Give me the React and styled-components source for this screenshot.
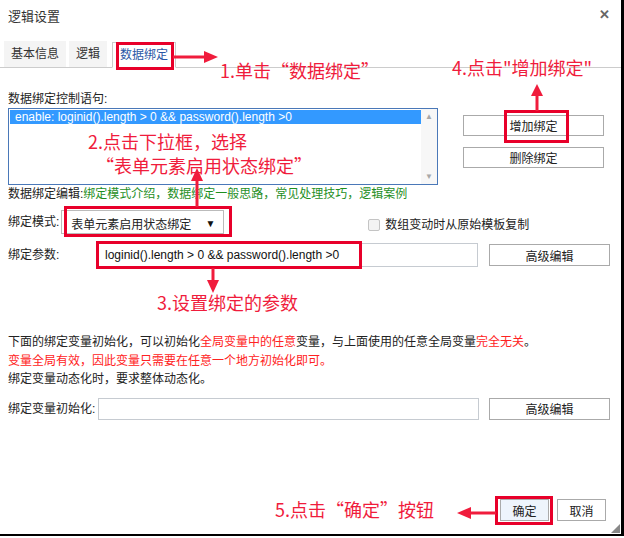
import React from 'react'
import styled, { createGlobalStyle } from 'styled-components'

const GlobalStyle = createGlobalStyle`
  html, body { margin: 0; padding: 0; background: #fff; }
  body {
    font-family: "Liberation Sans", "Noto Sans CJK SC", sans-serif;
    font-size: 12px;
    color: #222;
  }
`

const RED = '#f01c3c'

const App = () => {
  return (
    <>
      <GlobalStyle />
      <Dialog>
        <Header>
          <Title>逻辑设置</Title>
          <Close>✕</Close>
        </Header>
        <Tabs>
          <Tab>基本信息</Tab>
          <Tab>逻辑</Tab>
          <Tab $active>数据绑定</Tab>
        </Tabs>

        <Body>
          <TopRow>
            <ListCol>
              <Label>数据绑定控制语句:</Label>
              <ListBox>
                <ListItems>
                  <Item $selected>enable: loginid().length &gt; 0 &amp;&amp; password().length &gt;0</Item>
                </ListItems>
                <ScrollBar>
                  <ScrollArrow>▲</ScrollArrow>
                  <ScrollArrow>▼</ScrollArrow>
                </ScrollBar>
              </ListBox>
            </ListCol>
            <SideButtons>
              <Button $w={141} $h={21}>增加绑定</Button>
              <Button $w={141} $h={21}>删除绑定</Button>
            </SideButtons>
          </TopRow>

          <EditLine>
            数据绑定编辑:<Green>绑定模式介绍，数据绑定一般思路，常见处理技巧，逻辑案例</Green>
          </EditLine>

          <ModeRow>
            <Label>绑定模式:</Label>
            <Select>
              <span>表单元素启用状态绑定</span>
              <Caret>▼</Caret>
            </Select>
            <CheckLabel>
              <CheckBox />
              数组变动时从原始模板复制
            </CheckLabel>
          </ModeRow>

          <FieldRow $top={9}>
            <Label $w={88}>绑定参数:</Label>
            <Input $w={382} $h={24}>loginid().length &gt; 0 &amp;&amp; password().length &gt;0</Input>
            <Button $w={121} $h={22} $ml={11}>高级编辑</Button>
          </FieldRow>

          <Notes>
            <p>下面的绑定变量初始化，可以初始化<Red>全局变量中的任意</Red>变量，与上面使用的任意全局变量<Red>完全无关</Red>。</p>
            <p><Red>变量全局有效，因此变量只需要在任意一个地方初始化即可。</Red></p>
            <p>绑定变量动态化时，要求整体动态化。</p>
          </Notes>

          <FieldRow $top={9}>
            <Label $w={90}>绑定变量初始化:</Label>
            <Input $w={381} $h={22} />
            <Button $w={121} $h={22} $ml={10}>高级编辑</Button>
          </FieldRow>
        </Body>

        <Footer>
          <Button $w={49} $h={22} $primary>确定</Button>
          <Button $w={49} $h={22}>取消</Button>
        </Footer>

        <Grip />

        <Marks viewBox="0 0 621 534" width="621" height="534">
          <g fill="none" stroke="#e8002a" strokeWidth="3">
            <rect x="117.5" y="43.5" width="55" height="25" />
            <rect x="505.5" y="111.5" width="62" height="30" />
            <rect x="65.5" y="207.5" width="165" height="28" />
            <rect x="97.5" y="242.5" width="263" height="25" />
            <rect x="496.5" y="497.5" width="55" height="26" />
          </g>
          <g stroke={RED} strokeWidth="3" fill={RED}>
            <line x1="173" y1="57" x2="206" y2="57" />
            <polygon points="218,57 204,51 204,63" stroke="none" />
            <line x1="537" y1="111" x2="537" y2="94" />
            <polygon points="537,84 531,96 543,96" stroke="none" />
            <line x1="197" y1="207" x2="197" y2="178" />
            <polygon points="197,168 191,181 203,181" stroke="none" />
            <line x1="213" y1="268" x2="213" y2="282" />
            <polygon points="213,293 207,280 219,280" stroke="none" />
            <line x1="496" y1="513" x2="469" y2="513" />
            <polygon points="457,513 471,507 471,519" stroke="none" />
          </g>
        </Marks>

        <Note $x={220} $y={58}>1.单击“数据绑定”</Note>
        <Note $x={452} $y={55}>4.点击"增加绑定"</Note>
        <Note $x={88} $y={129}>2.点击下拉框，选择</Note>
        <Note $x={96} $y={153}>“表单元素启用状态绑定”</Note>
        <Note $x={157} $y={290}>3.设置绑定的参数</Note>
        <Note $x={275} $y={497}>5.点击“确定”按钮</Note>
      </Dialog>
    </>
  )
}

export default App

const Dialog = styled.div`
  position: relative;
  width: 621px;
  height: 534px;
  border-right: 3px solid #000;
  border-bottom: 2px solid #000;
  background: #fff;
  display: flex;
  flex-direction: column;
  overflow: hidden;
`

const Header = styled.div`
  height: 41px;
  display: flex;
  align-items: flex-start;
  justify-content: space-between;
  padding: 0 11px 0 8px;
  box-sizing: border-box;
`

const Title = styled.div`
  font-size: 13px;
  line-height: 34px;
  color: #333;
`

const Close = styled.div`
  font-size: 13px;
  font-weight: bold;
  line-height: 30px;
  color: #666;
`

const Tabs = styled.div`
  display: flex;
  align-items: flex-end;
  gap: 3px;
  height: 26px;
  padding-left: 4px;
  border-bottom: 1px solid #ccc;
`

const Tab = styled.div`
  height: 26px;
  line-height: 24px;
  padding: 0 6px;
  font-size: 12px;
  box-sizing: border-box;
  margin-bottom: ${p => (p.$active ? '-1px' : '0')};
  background: ${p => (p.$active ? '#fff' : '#f4f4f4')};
  color: ${p => (p.$active ? '#2a57a6' : '#333')};
  border: 1px solid ${p => (p.$active ? '#ccc' : 'transparent')};
  border-bottom-color: ${p => (p.$active ? '#fff' : 'transparent')};
  margin-left: ${p => (p.$active ? '2px' : '0')};
  padding: ${p => (p.$active ? '0 7px' : '0 6px')};
`

const Body = styled.div`
  padding: 0 8px;
  display: flex;
  flex-direction: column;
`

const TopRow = styled.div`
  display: flex;
  align-items: flex-start;
  margin-top: 23px;
`

const ListCol = styled.div`
  display: flex;
  flex-direction: column;
`

const Label = styled.span`
  line-height: 16px;
  white-space: nowrap;
  flex: none;
  width: ${p => (p.$w ? `${p.$w}px` : 'auto')};
`

const ListBox = styled.div`
  width: 430px;
  height: 77px;
  box-sizing: border-box;
  border: 1px solid #4a78b8;
  display: flex;
  margin-top: 1px;
`

const ListItems = styled.div`
  flex: 1;
  padding: 1px 0 0 1px;
`

const Item = styled.div`
  height: 14px;
  line-height: 14px;
  padding-left: 5px;
  font-size: 12px;
  color: ${p => (p.$selected ? '#fff' : '#222')};
  background: ${p => (p.$selected ? '#3399ff' : 'transparent')};
`

const ScrollBar = styled.div`
  width: 16px;
  background: #f7f7f7;
  display: flex;
  flex-direction: column;
  justify-content: space-between;
  align-items: center;
  padding: 3px 0 2px;
`

const ScrollArrow = styled.span`
  font-size: 8px;
  line-height: 10px;
  color: #a8a8a8;
`

const SideButtons = styled.div`
  display: flex;
  flex-direction: column;
  gap: 11px;
  margin: 24px 0 0 25px;
`

const Button = styled.div`
  width: ${p => p.$w}px;
  height: ${p => p.$h}px;
  margin-left: ${p => (p.$ml ? `${p.$ml}px` : '0')};
  box-sizing: border-box;
  border: 1px solid #aaa;
  background: ${p => (p.$primary ? '#eef4fc' : '#fff')};
  display: flex;
  align-items: center;
  justify-content: center;
  font-size: 12px;
  color: #222;
  flex: none;
`

const EditLine = styled.div`
  line-height: 16px;
  margin-top: 1px;
`

const Green = styled.span`
  color: #1f8f1f;
`

const ModeRow = styled.div`
  display: flex;
  align-items: center;
  margin-top: 8px;
  height: 24px;
`

const Select = styled.div`
  width: 163px;
  height: 24px;
  margin-left: 2px;
  box-sizing: border-box;
  border: 1px solid #bbb;
  display: flex;
  align-items: center;
  justify-content: space-between;
  padding: 2px 8px 0 9px;
`

const Caret = styled.span`
  font-size: 10px;
  color: #111;
`

const CheckLabel = styled.label`
  display: flex;
  align-items: center;
  gap: 5px;
  margin: 5px 0 0 144px;
  line-height: 16px;
`

const CheckBox = styled.span`
  width: 10px;
  height: 10px;
  border: 1px solid #c4c4c4;
  border-radius: 2px;
  background: #f3f3f3;
`

const FieldRow = styled.div`
  display: flex;
  align-items: center;
  margin-top: ${p => p.$top}px;
`

const Input = styled.div`
  width: ${p => p.$w}px;
  height: ${p => p.$h}px;
  box-sizing: border-box;
  border: 1px solid #c6cbd1;
  padding: 0 8px;
  display: flex;
  align-items: center;
  font-size: 12px;
  color: #111;
`

const Notes = styled.div`
  margin-top: 66px;
  p {
    margin: 0;
    line-height: 18.5px;
  }
`

const Red = styled.span`
  color: #f22;
`

const Footer = styled.div`
  margin-top: auto;
  display: flex;
  justify-content: flex-end;
  gap: 8px;
  padding: 0 15px 13px 0;
`

const Grip = styled.div`
  position: absolute;
  right: 1px;
  bottom: 1px;
  width: 0;
  height: 0;
  border-left: 9px solid transparent;
  border-bottom: 9px solid #888;
`

const Marks = styled.svg`
  position: absolute;
  left: 0;
  top: 0;
  pointer-events: none;
`

const Note = styled.span`
  position: absolute;
  left: ${p => p.$x}px;
  top: ${p => p.$y}px;
  font-family: "Noto Sans CJK SC", sans-serif;
  font-size: 18px;
  line-height: 24px;
  color: ${RED};
  white-space: nowrap;
`
